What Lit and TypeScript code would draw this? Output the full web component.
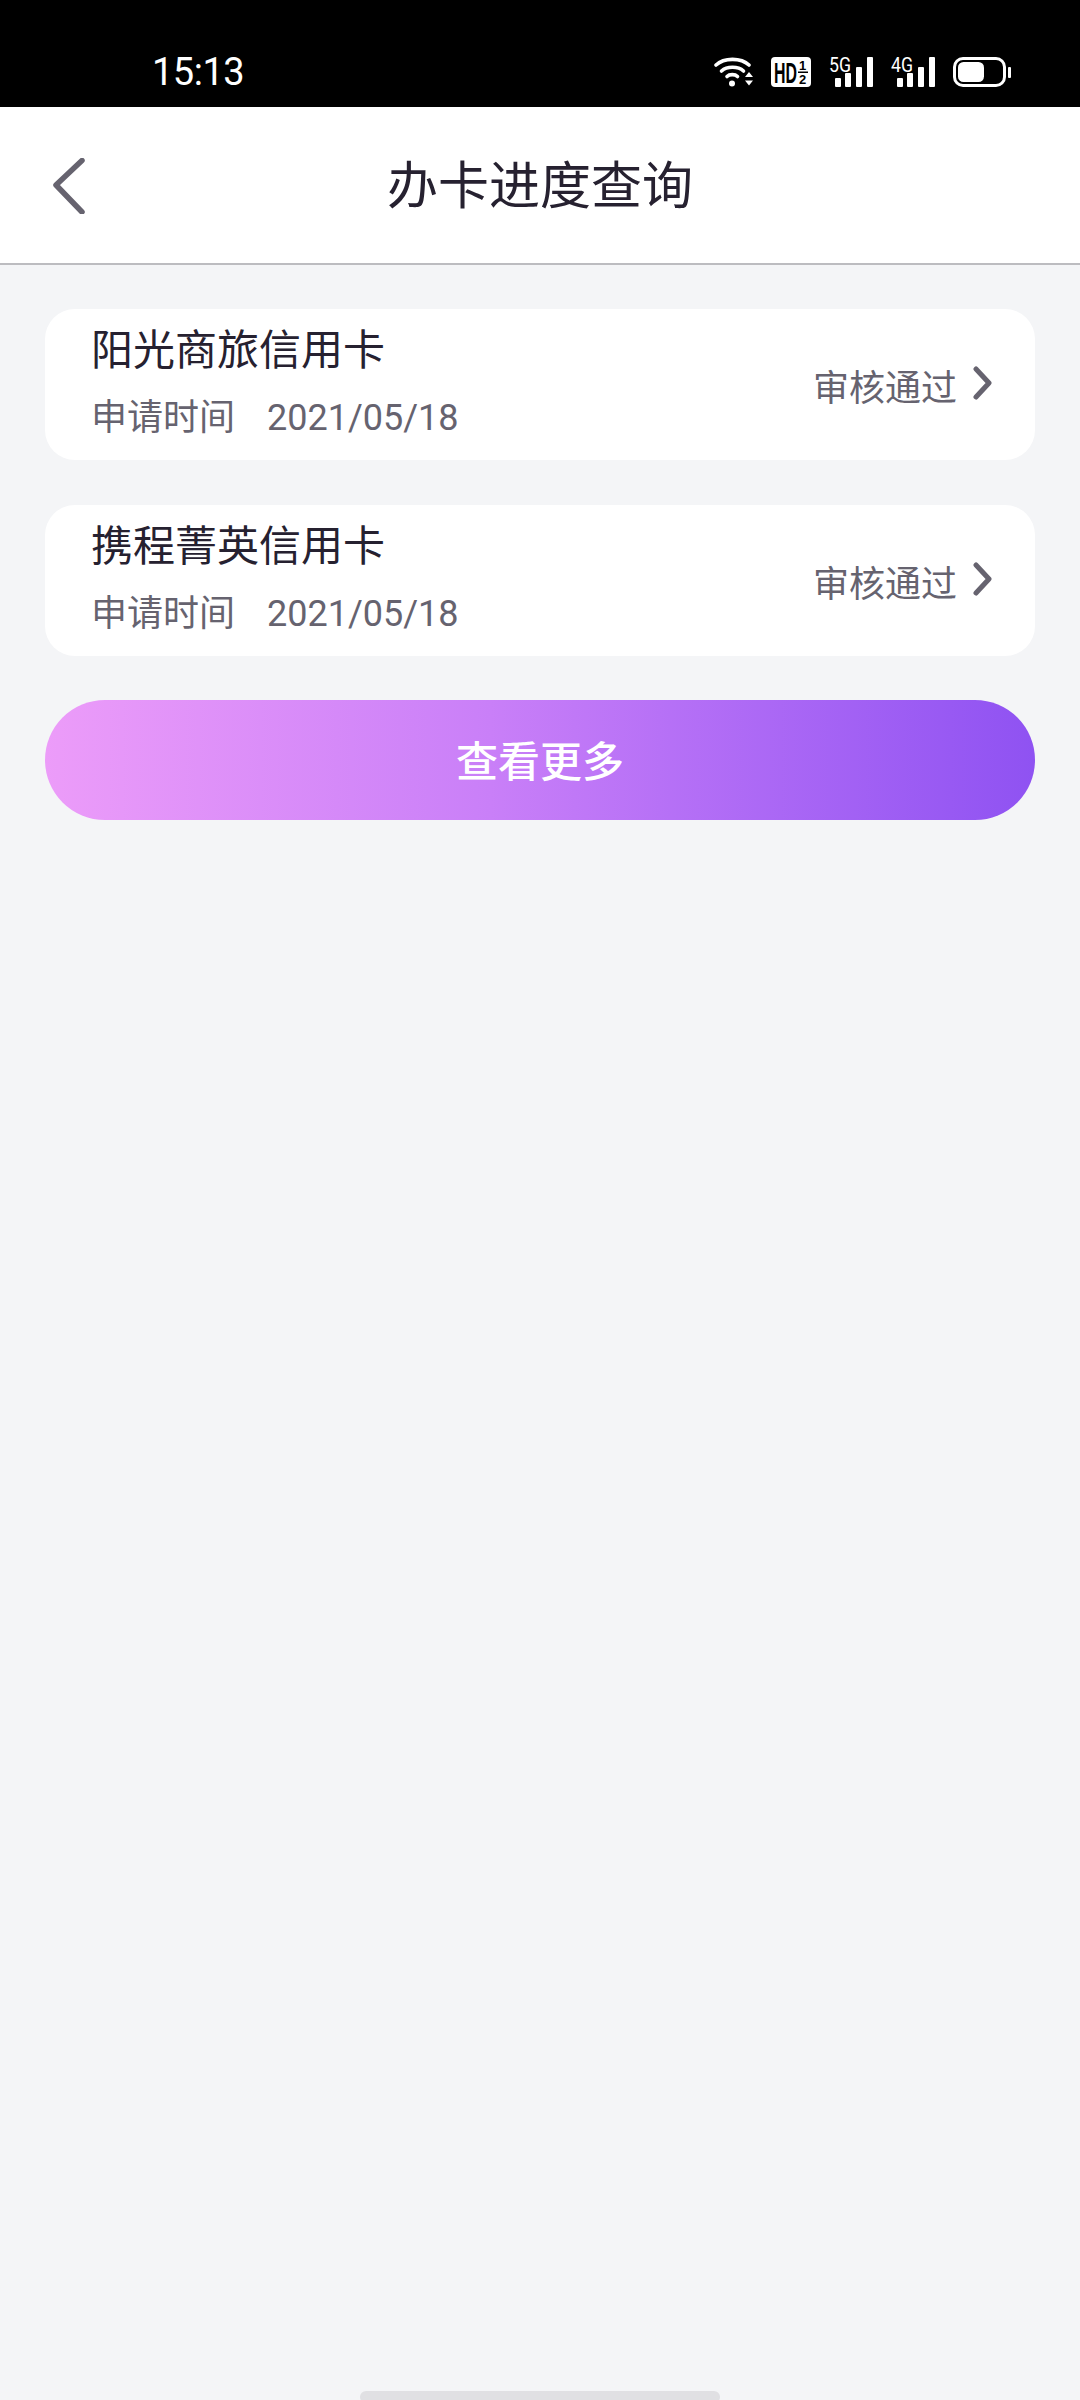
import { LitElement, html, css, svg } from "lit";
import { customElement } from "lit/decorators.js";

const cards = [
  { name: "阳光商旅信用卡", date: "2021/05/18", status: "审核通过" },
  { name: "携程菁英信用卡", date: "2021/05/18", status: "审核通过" },
];

// signal bars shared by the 5G and 4G icons
const bars = svg`
  <rect x="6" y="21" width="6" height="9" rx="1" />
  <rect x="16" y="16" width="6" height="14" rx="1" />
  <rect x="27" y="10" width="6" height="20" rx="1" />
  <rect x="38" y="0" width="6" height="30" rx="1" />
`;

@customElement("app-root")
export class AppRoot extends LitElement {
  static styles = css`
    :host {
      display: block;
      width: 1080px;
      height: 2400px;
      background: #f4f5f7;
      font-family: "Roboto", "Noto Sans CJK SC", sans-serif;
      position: relative;
      overflow: hidden;
    }
    .status {
      height: 107px;
      background: #000;
      color: #fff;
      display: flex;
      align-items: center;
      padding: 37px 69px 0 152px;
      box-sizing: border-box;
    }
    .time {
      font-size: 38px;
      line-height: 1;
      letter-spacing: -0.5px;
      flex: 1;
    }
    .status-icons {
      display: flex;
      align-items: center;
      gap: 18px;
    }
    .status-icons svg {
      display: block;
      fill: #fff;
    }
    .header {
      height: 158px;
      background: #fff;
      border-bottom: 2px solid #bcbcc0;
      box-sizing: border-box;
      display: flex;
      align-items: center;
      justify-content: center;
      position: relative;
    }
    .back {
      position: absolute;
      left: 52px;
      top: 51px;
    }
    .title {
      font-size: 51px;
      color: #262130;
      line-height: 1;
      margin-top: 3px;
    }
    .content {
      display: flex;
      flex-direction: column;
      gap: 45px;
      padding: 44px 45px 0;
    }
    .card {
      height: 151px;
      background: #fff;
      border-radius: 30px;
      display: flex;
      align-items: center;
      justify-content: space-between;
      padding: 0 42px 0 46px;
      box-sizing: border-box;
    }
    .card-name {
      font-size: 42px;
      line-height: 50px;
      color: #262130;
    }
    .card-date {
      font-size: 36px;
      line-height: 44px;
      color: #66636f;
      margin-top: 20px;
      display: flex;
      gap: 32px;
    }
    .card-main {
      margin-top: -3px;
    }
    .card-status {
      display: flex;
      align-items: center;
      gap: 16px;
      font-size: 36px;
      color: #66636f;
    }
    .card-status svg {
      margin-top: -3px;
    }
    .more {
      height: 120px;
      margin-top: -1px;
      padding-bottom: 4px;
      box-sizing: border-box;
      border-radius: 60px;
      background: linear-gradient(90deg, #ec9cf9 0%, #c97ff8 45%, #8f52f2 100%);
      color: #fff;
      font-size: 42px;
      font-weight: 500;
      display: flex;
      align-items: center;
      justify-content: center;
    }
    .home-bar {
      position: absolute;
      left: 360px;
      top: 2391px;
      width: 360px;
      height: 12px;
      border-radius: 6px;
      background: #e0e0e3;
    }
  `;

  renderStatusIcons() {
    return html`
      <div class="status-icons">
        <svg width="39" height="30" viewBox="0 0 39 30">
          <g fill="none" stroke="#fff" stroke-width="3.6" stroke-linecap="round">
            <path d="M2 8C10 0.5 27 0.5 35 8" />
            <path d="M7.5 14C13 9 24 9 29.5 14" />
            <path d="M13 19.5C15.5 17 21 17 23.5 19.5" />
          </g>
          <circle cx="18" cy="26.5" r="3" />
          <path d="M35 15l4 5h-8zM35 28.5l-4-5h8z" />
        </svg>
        <svg width="40" height="30" viewBox="0 0 40 30">
          <rect width="40" height="30" rx="4" />
          <text x="3" y="26" font-family="Liberation Sans, sans-serif" font-size="29" font-weight="700" fill="#000" textLength="23" lengthAdjust="spacingAndGlyphs">HD</text>
          <text x="28" y="13" font-family="Liberation Sans, sans-serif" font-size="13" font-weight="700" fill="#000">1</text>
          <rect x="27" y="14.5" width="10" height="1.5" fill="#000" />
          <text x="28" y="27" font-family="Liberation Sans, sans-serif" font-size="13" font-weight="700" fill="#000">2</text>
        </svg>
        <svg width="44" height="30" viewBox="0 0 44 30">
          <text x="0" y="15" font-family="Roboto, sans-serif" font-size="20" textLength="22" lengthAdjust="spacingAndGlyphs">5G</text>
          ${bars}
        </svg>
        <svg width="44" height="30" viewBox="0 0 44 30">
          <text x="0" y="15" font-family="Roboto, sans-serif" font-size="20" textLength="22" lengthAdjust="spacingAndGlyphs">4G</text>
          ${bars}
        </svg>
        <svg width="58" height="30" viewBox="0 0 58 30">
          <rect x="1.5" y="1.5" width="50" height="27" rx="8.5" fill="none" stroke="#fff" stroke-width="3" />
          <rect x="5" y="5" width="26" height="20" rx="5.5" />
          <rect x="55" y="10" width="3" height="11" rx="1" />
        </svg>
      </div>
    `;
  }

  render() {
    return html`
      <div class="status">
        <div class="time">15:13</div>
        ${this.renderStatusIcons()}
      </div>
      <div class="header">
        <svg class="back" width="34" height="56" viewBox="0 0 34 56" fill="none">
          <path d="M30 3.5L4 28l26 27" transform="translate(0 -1)" stroke="#66636f" stroke-width="5.5" stroke-linecap="round" stroke-linejoin="round" />
        </svg>
        <div class="title">办卡进度查询</div>
      </div>
      <div class="content">
        ${cards.map(
          (c) => html`
            <div class="card">
              <div class="card-main">
                <div class="card-name">${c.name}</div>
                <div class="card-date"><span>申请时间</span><span>${c.date}</span></div>
              </div>
              <div class="card-status">
                <span>${c.status}</span>
                <svg width="20" height="34" viewBox="0 0 20 34" fill="none">
                  <path d="M3 3l13 14L3 31" stroke="#66636f" stroke-width="5" stroke-linecap="round" stroke-linejoin="round" />
                </svg>
              </div>
            </div>
          `
        )}
        <div class="more">查看更多</div>
      </div>
      <div class="home-bar"></div>
    `;
  }
}
